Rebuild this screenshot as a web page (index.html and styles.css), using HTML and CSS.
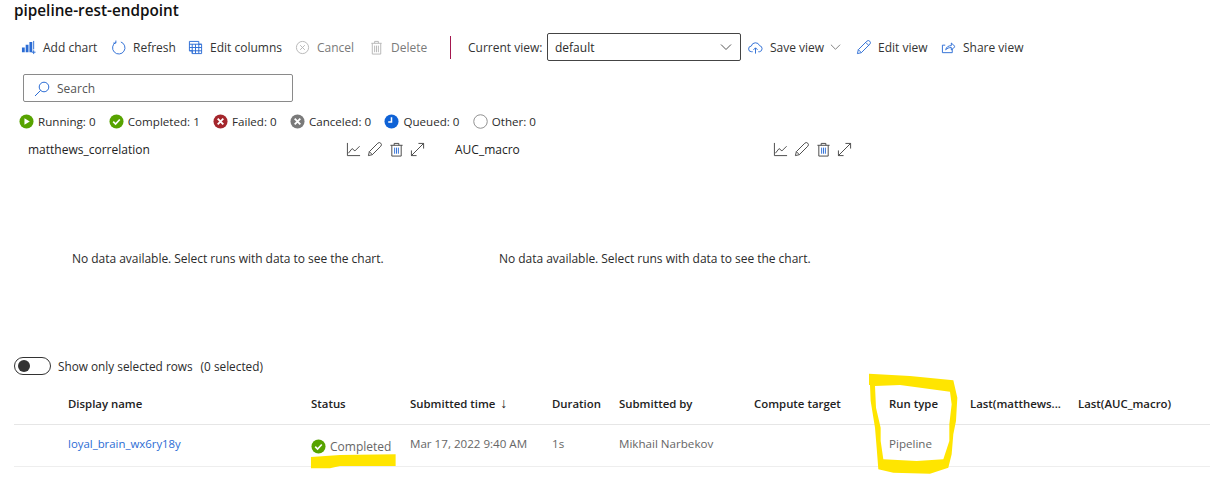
FILE: index.html
```html
<!DOCTYPE html>
<html lang="en">
<head>
<meta charset="utf-8">
<title>pipeline-rest-endpoint</title>
<link rel="stylesheet" href="styles.css">
</head>
<body>
<main class="page">
  <h1 class="title">pipeline-rest-endpoint</h1>

  <div class="toolbar">
    <button class="cmd w-add"><svg class="ico" viewBox="0 0 16 16"><path d="M1 8h3v5H1zM5 5h3v8H5zM9 2h3v11H9z" fill="#2b6cd4"/><path d="M13.5 1v9M13.500 11v4M11.500 13h4" stroke="#2b6cd4" fill="none"/></svg>Add chart</button>
    <button class="cmd w-refresh"><svg class="ico" viewBox="0 0 16 16"><path d="M5 2.600A6.600 6.600 0 1 0 10.500 2.100M5.200 0.600V3.300H2.400" stroke="#2b6cd4" fill="none"/></svg>Refresh</button>
    <button class="cmd w-cols"><svg class="ico" viewBox="0 0 16 16"><path d="M1.500 1.500h10v3h3v10h-10v-3h-3zM1.500 4.500h13M4.500 4.500v10M1.500 8h13M1.500 11.500h13M8 4.500v10M11.500 4.500v10" stroke="#2b6cd4" fill="none"/></svg>Edit columns</button>
    <button class="cmd w-cancel off"><svg class="ico" viewBox="0 0 16 16"><circle cx="8" cy="8" r="6.500" stroke="#b5b5b5" fill="none"/><path d="M5.500 5.500l5 5M10.500 5.500l-5 5" stroke="#b5b5b5"/></svg>Cancel</button>
    <button class="cmd w-delete off"><svg class="ico" viewBox="0 0 16 16"><path d="M2.500 3.500h11M6 3.500V1.500h4v2M3.500 3.500v11.500h9V3.500M6 6v7M8 6v7M10 6v7" stroke="#b5b5b5" fill="none"/></svg>Delete</button>
    <span class="divider"></span>
    <label class="view-label">Current view:</label>
    <div class="select"><span>default</span><svg class="chev" viewBox="0 0 12 8"><path d="M1 1.500l5 5 5-5" stroke="#555" fill="none"/></svg></div>
    <button class="cmd save"><svg class="ico" viewBox="0 0 16 16"><path d="M5 12.500H3.800a3 3 0 0 1-.3-6A4.600 4.600 0 0 1 12.300 6a3.300 3.300 0 0 1 0 6.500H11M8 14.500V8.500M5.800 10.500L8 8.300l2.200 2.200" stroke="#2b6cd4" fill="none"/></svg>Save view<svg class="chev small" viewBox="0 0 12 8"><path d="M1 1.500l5 5 5-5" stroke="#777" fill="none"/></svg></button>
    <button class="cmd edit"><svg class="ico" viewBox="0 0 16 16"><path d="M1.500 14.500l1-4.200L11.500 1.300a1.800 1.800 0 0 1 3.200 3.200L5.700 13.500zM2.500 10.300l3.200 3.200M10.300 2.500l3.200 3.200" stroke="#2b6cd4" fill="none"/></svg>Edit view</button>
    <button class="cmd share"><svg class="ico" viewBox="0 0 16 16"><path d="M12 9.500v4H1.500V5.500h3M5 10.500c.5-3 3-4.500 6-4.500V3.200l4 3.800-4 3.600V8C8.500 8 6.500 8.800 5 10.500z" stroke="#2b6cd4" fill="none"/></svg>Share view</button>
  </div>

  <div class="search"><svg class="search-ico" viewBox="0 0 16 16"><circle cx="10" cy="6" r="4.800" stroke="#2b6cd4" fill="none"/><path d="M6.600 9.400L1 15" stroke="#2b6cd4" fill="none"/></svg><span>Search</span></div>

  <ul class="statuses">
    <li><svg class="dot" viewBox="0 0 16 16"><circle cx="8" cy="8" r="7.500" fill="#57a300"/><path d="M5.800 4.500v7L11.500 8z" fill="#fff"/></svg>Running: 0</li>
    <li><svg class="dot" viewBox="0 0 16 16"><circle cx="8" cy="8" r="7.500" fill="#57a300"/><path d="M4.500 8.200l2.500 2.500 4.500-4.800" stroke="#fff" stroke-width="1.800" fill="none"/></svg>Completed: 1</li>
    <li><svg class="dot" viewBox="0 0 16 16"><circle cx="8" cy="8" r="7.500" fill="#a4262c"/><path d="M5 5l6 6M11 5l-6 6" stroke="#fff" stroke-width="2"/></svg>Failed: 0</li>
    <li><svg class="dot" viewBox="0 0 16 16"><circle cx="8" cy="8" r="7.500" fill="#7a7a7a"/><path d="M5 5l6 6M11 5l-6 6" stroke="#fff" stroke-width="2"/></svg>Canceled: 0</li>
    <li><svg class="dot" viewBox="0 0 16 16"><circle cx="8" cy="8" r="7.500" fill="#0f62d6"/><path d="M8 3.500V8.500H4.500" stroke="#fff" stroke-width="1.600" fill="none"/></svg>Queued: 0</li>
    <li><svg class="dot" viewBox="0 0 16 16"><circle cx="8" cy="8" r="7.200" fill="none" stroke="#8a8a8a"/></svg>Other: 0</li>
  </ul>

  <section class="charts">
    <article class="chart">
      <header class="chart-head"><span>matthews_correlation</span>
        <div class="chart-tools">
          <svg class="tool" viewBox="0 0 16 16"><path d="M1.500 1v13.500H15M2.500 12l4-5 3 2.500 5-5" stroke="#444" fill="none"/></svg>
          <svg class="tool" viewBox="0 0 16 16"><path d="M1.500 14.500l1-4.200L11.500 1.300a1.800 1.800 0 0 1 3.200 3.200L5.700 13.500zM2.500 10.300l3.200 3.200" stroke="#444" fill="none"/></svg>
          <svg class="tool" viewBox="0 0 16 16"><path d="M1.500 3.500h13M5.500 3.500V1.500h5v2M3 3.500v11.500h10V3.500" stroke="#444" fill="none"/><path d="M6 6v6.500M8 6v6.500M10 6v6.500" stroke="#2b6cd4" fill="none"/></svg>
          <svg class="tool" viewBox="0 0 16 16"><path d="M1.500 14.500l13-13M9 1.500h5.500V7M1.500 9v5.500H7" stroke="#444" fill="none"/></svg>
        </div>
      </header>
      <p class="empty">No data available. Select runs with data to see the chart.</p>
    </article>
    <article class="chart">
      <header class="chart-head"><span>AUC_macro</span>
        <div class="chart-tools">
          <svg class="tool" viewBox="0 0 16 16"><path d="M1.500 1v13.500H15M2.500 12l4-5 3 2.500 5-5" stroke="#444" fill="none"/></svg>
          <svg class="tool" viewBox="0 0 16 16"><path d="M1.500 14.500l1-4.200L11.500 1.300a1.800 1.800 0 0 1 3.200 3.200L5.700 13.500zM2.500 10.300l3.200 3.200" stroke="#444" fill="none"/></svg>
          <svg class="tool" viewBox="0 0 16 16"><path d="M1.500 3.500h13M5.500 3.500V1.500h5v2M3 3.500v11.500h10V3.500" stroke="#444" fill="none"/><path d="M6 6v6.500M8 6v6.500M10 6v6.500" stroke="#2b6cd4" fill="none"/></svg>
          <svg class="tool" viewBox="0 0 16 16"><path d="M1.500 14.500l13-13M9 1.500h5.500V7M1.500 9v5.500H7" stroke="#444" fill="none"/></svg>
        </div>
      </header>
      <p class="empty">No data available. Select runs with data to see the chart.</p>
    </article>
  </section>

  <div class="toggle-row"><span class="toggle"><span class="knob"></span></span><span>Show only selected rows</span><span class="count">(0 selected)</span></div>

  <div class="table">
    <div class="row head">
      <span>Display name</span><span>Status</span><span>Submitted time <span class="arrow">↓</span></span><span>Duration</span><span>Submitted by</span><span>Compute target</span><span>Run type</span><span>Last(matthews...</span><span>Last(AUC_macro)</span>
    </div>
    <div class="row body">
      <a class="link">loyal_brain_wx6ry18y</a>
      <span class="status-cell"><svg class="dot" viewBox="0 0 16 16"><circle cx="8" cy="8" r="7.500" fill="#57a300"/><path d="M4.500 8.200l2.500 2.500 4.500-4.800" stroke="#fff" stroke-width="1.800" fill="none"/></svg>Completed</span>
      <span>Mar 17, 2022 9:40 AM</span><span>1s</span><span>Mikhail Narbekov</span><span></span><span>Pipeline</span><span></span><span></span>
    </div>
  </div>

  <svg class="scribble" viewBox="0 0 1210 494" aria-hidden="true">
    <g transform="translate(0 350) scale(.3333)"><path class="ink" d="M933 318L1020 312L1187 310L1187 345L1020 345L990 352L933 352Z"/></g>
    <g transform="translate(850 360) scale(.3333)"><path class="ink" fill-rule="evenodd" d="M57 38L180 45L310 58L322 110L318 180L310 220L305 280L295 320L240 338L130 335L85 325L80 260L75 200L62 120L60 72L57 72ZM75 75L150 72L300 92L305 130L298 190L298 240L280 295L200 300L100 295L92 240L92 200L78 140Z"/></g>
  </svg>
</main>
</body>
</html>
```
FILE: styles.css
```css
* { box-sizing: border-box; }
html, body { margin: 0; height: 100%; background: #fff; overflow: hidden; }
body { font-family: "Open Sans", "Noto Sans", "Liberation Sans", sans-serif; font-size: 12px; color: #2b2b2b; }
.page { position: relative; width: 1210px; height: 494px; }
.title { margin: 1px 0 0; padding: 0 0 0 14px; height: 19px; font-size: 15.300px; line-height: 19px; font-weight: 600; color: #111; }

.toolbar { display: flex; align-items: center; height: 34px; margin-top: 10px; padding-left: 21px; }
.cmd { display: inline-flex; align-items: center; gap: 7px; padding: 0; border: 0; background: none; font: inherit; color: #333; white-space: nowrap; }
.cmd.off { color: #7a7a7a; }
.ico { width: 15px; height: 15px; flex: none; }
.w-add { width: 90px; }
.w-refresh { width: 77px; }
.w-cols { width: 107px; }
.w-cancel { width: 74px; }
.w-delete { width: 81px; }
.divider { width: 1px; height: 23px; background: #a4174f; margin-right: 17px; }
.view-label { width: 79px; white-space: nowrap; color: #333; }
.select { display: flex; align-items: center; justify-content: space-between; width: 194px; height: 28px; border: 1px solid #444; border-radius: 2px; padding: 0 8px 0 7px; }
.chev { width: 12px; height: 8px; }
.chev.small { width: 11px; margin-left: -1px; }
.save { margin-left: 7px; width: 108px; }
.edit { width: 85px; }
.share { width: 90px; }

.search { display: flex; align-items: center; gap: 7px; width: 270px; height: 28px; margin: 10px 0 0 23px; padding: 1px 0 0 10px; border: 1px solid #8a8a8a; border-radius: 2px; color: #555; }
.search-ico { width: 16px; height: 16px; }

.statuses { display: flex; align-items: center; gap: 13.300px; list-style: none; height: 20px; margin: 9px 0 0; padding: 0 0 0 19px; font-size: 11.600px; }
.statuses li { display: flex; align-items: center; gap: 4px; white-space: nowrap; }
.dot { width: 15px; height: 15px; flex: none; }

.charts { display: flex; margin-top: 8px; padding-left: 28px; }
.chart { width: 427px; height: 218px; }
.chart-head { display: flex; align-items: center; height: 20px; width: 398px; justify-content: space-between; color: #222; }
.chart-tools { display: flex; gap: 6.500px; margin-right: 1px; }
.tool { width: 15px; height: 15px; }
.empty { margin: 90px 0 0 44px; line-height: 20px; letter-spacing: -0.030px; }

.toggle-row { display: flex; align-items: center; height: 20px; padding-left: 14px; gap: 7px; margin-top: -1px; font-size: 11.800px; }
.toggle { display: flex; align-items: center; width: 37px; height: 18px; border: 1px solid #333; border-radius: 9px; padding-left: 3px; }
.knob { width: 12px; height: 12px; border-radius: 50%; background: #333; }
.count { margin-left: 1px; }

.table { margin: 17px 0 0 14px; }
.row { display: grid; grid-template-columns: 243px 99px 142px 67px 135px 135px 81px 108px 1fr; padding-left: 54px; align-items: center; white-space: nowrap; }
.head { height: 20px; font-weight: 600; color: #222; font-size: 11.400px; }
.arrow { font-weight: 400; font-size: 14px; line-height: 14px; margin-left: 2px; font-family: "Liberation Sans", sans-serif; }
.body { height: 43px; margin-top: 11px; padding-bottom: 4px; border-top: 1px solid #e6e6e6; border-bottom: 1px solid #eee; color: #666; font-size: 11.600px; }
.link { color: #2b6cd4; font-size: 11.400px; }
.status-cell { display: flex; align-items: center; gap: 4px; padding-top: 5px; font-size: 12px; }

.scribble { position: absolute; left: 0; top: 0; width: 1210px; height: 494px; pointer-events: none; }
.ink { fill: #ffe500; }
```
